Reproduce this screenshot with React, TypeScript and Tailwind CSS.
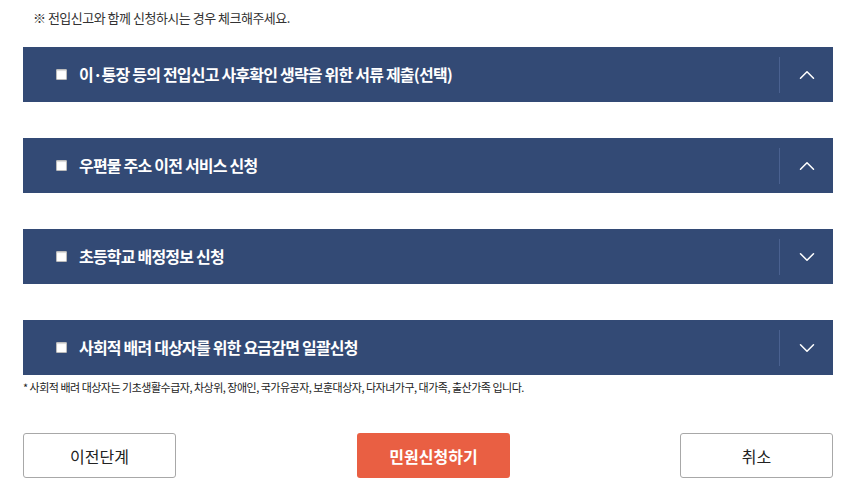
import { ChevronUp, ChevronDown } from 'lucide-react';

const sections = [
  { title: '이·통장 등의 전입신고 사후확인 생략을 위한 서류 제출(선택)', open: true },
  { title: '우편물 주소 이전 서비스 신청', open: true },
  { title: '초등학교 배정정보 신청', open: false },
  { title: '사회적 배려 대상자를 위한 요금감면 일괄신청', open: false },
];

const font = { fontFamily: '"Noto Sans CJK KR", "Noto Sans", sans-serif' };

export default function App() {
  return (
    <div className="w-[853px] h-[499px] bg-white overflow-hidden" style={font}>
      <div className="pl-[23px] pr-[20px]">
        <p className="pt-[8px] pl-[10px] text-[13px] leading-[19px] text-[#333] tracking-[-0.5px]">
          ※ 전입신고와 함께 신청하시는 경우 체크해주세요.
        </p>

        <div className="mt-[20px] flex flex-col gap-[36px]">
          {sections.map((s) => (
            <div key={s.title} className="h-[55px] bg-[#334a75] flex items-center">
              <div className="flex-1 flex items-center pl-[33px]">
                <span className="w-[11px] h-[11px] bg-white border border-[#bbb] rounded-[1px] shadow-[inset_0_1px_1px_rgba(0,0,0,0.15)]" />
                <span className="ml-[12px] -mt-[2px] text-[16px] font-bold text-white tracking-[-0.8px] leading-none">
                  {s.title}
                </span>
              </div>
              <div className="w-px h-[36px] bg-[#4a6190]" />
              <div className="w-[53px] flex justify-center">
                {s.open ? (
                  <ChevronUp className="w-[26px] h-[26px] text-white" strokeWidth={1.4} />
                ) : (
                  <ChevronDown className="w-[26px] h-[26px] text-white" strokeWidth={1.4} />
                )}
              </div>
            </div>
          ))}
        </div>

        <p className="mt-[5px] text-[11px] leading-[14px] text-[#222] tracking-[-0.5px]">
          * 사회적 배려 대상자는 기초생활수급자, 차상위, 장애인, 국가유공자, 보훈대상자, 다자녀가구, 대가족, 출산가족 입니다.
        </p>

        <div className="mt-[39px] flex items-center">
          <button className="w-[153px] h-[45px] border border-[#a8a8a8] rounded-[3px] bg-white text-[16px] text-[#222]">
            이전단계
          </button>
          <button className="ml-[181px] w-[153px] h-[45px] rounded-[3px] bg-[#e95f43] text-[16px] font-bold text-white">
            민원신청하기
          </button>
          <button className="ml-[170px] w-[153px] h-[45px] border border-[#a8a8a8] rounded-[3px] bg-white text-[16px] text-[#222]">
            취소
          </button>
        </div>
      </div>
    </div>
  );
}
